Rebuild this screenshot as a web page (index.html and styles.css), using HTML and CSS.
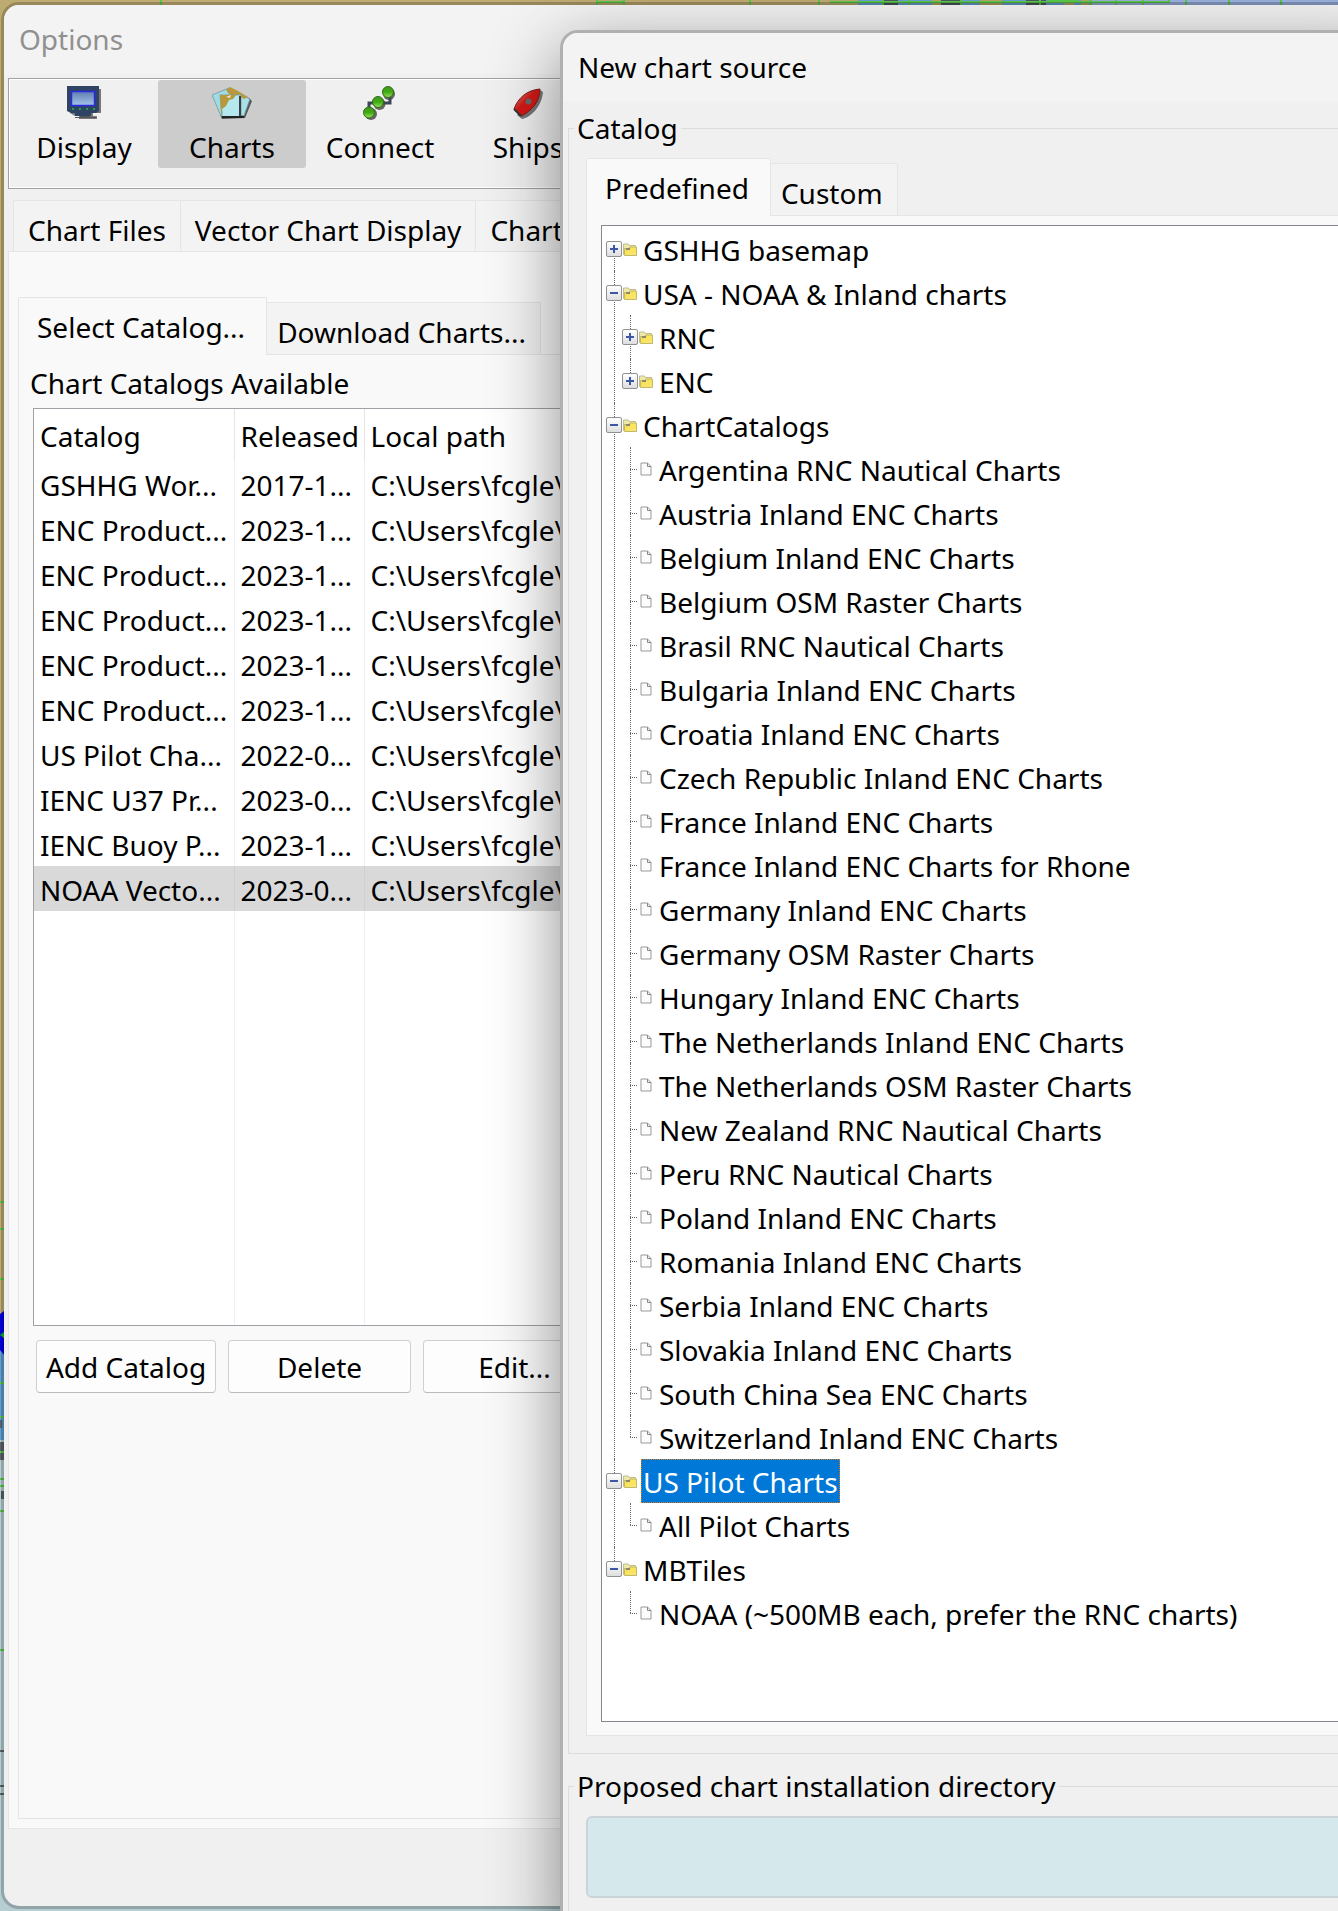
FILE: index.html
```html
<!DOCTYPE html>
<html lang="en">
<head>
<meta charset="utf-8">
<title>Options</title>
<link rel="stylesheet" href="styles.css">
</head>
<body>
<svg class="sprite" aria-hidden="true">
  <defs>
    <linearGradient id="yellow" x1="0" y1="0" x2="1" y2="1"><stop offset="0" stop-color="#f7e04a"/><stop offset="1" stop-color="#f9e773"/></linearGradient>
    <linearGradient id="screen" x1="0" y1="0" x2="0" y2="1"><stop offset="0" stop-color="#5f7fb2"/><stop offset="1" stop-color="#a5c3ea"/></linearGradient>
    <linearGradient id="green" x1="0" y1="0" x2="0" y2="1"><stop offset="0" stop-color="#3f9a1c"/><stop offset=".5" stop-color="#3faa12"/><stop offset="1" stop-color="#9be05c"/></linearGradient>
    <linearGradient id="red" x1="0" y1="0" x2="1" y2="1"><stop offset="0" stop-color="#e58a86"/><stop offset=".45" stop-color="#cf1a16"/><stop offset="1" stop-color="#e01010"/></linearGradient>
    <symbol id="folder" viewBox="0 0 14 13">
      <path d="M0.500 11.500V1h5l1 1.500H12.500v9z" fill="#efe9a8" stroke="#c0bb94"/>
      <path d="M1.500 12.500V5.500h4l1.500-1.500H13.500v8.500z" fill="url(#yellow)" stroke="#c2b86a"/>
      <path d="M3 5h4v2H3z" fill="#8a8a6a"/>
    </symbol>
    <symbol id="page" viewBox="0 0 12 14">
      <path d="M1 1h6.500L11 4.500V13H1z" fill="#fcfcfc" stroke="#999"/>
      <path d="M7.500 1v3.500H11" fill="none" stroke="#888"/>
    </symbol>
  </defs>
</svg>

<svg class="map-top" aria-hidden="true" width="1338" height="5">
  <path d="M161 0v5M597 2h27M597 0v5M624 0v5M750 0v5M819 0v5" stroke="#5ac94a" stroke-width="2" fill="none"/>
  <path d="M858 0h232v5H858z" fill="#6a9fd2"/>
  <path d="M1090 0h248v5h-248z" fill="#9ab0dc"/>
  <path d="M884 0h14v5h-14zM941 0h20v5h-20zM1026 0h20v5h-20z" fill="#4d5560"/>
  <path d="M932 0h9v5h-9zM980 0h22v5h-22zM1064 3h10v2h-10zM1081 0h8v5h-8z" fill="#b5a565"/>
  <path d="M830 2h340M883 0v5M909 0v5M961 0v5M1040 0v5M1091 0v5M1116 0v5M1143 0v5M1169 0v3M1186 0v5M1229 0v5M1281 0v5" stroke="#5ac94a" stroke-width="2" fill="none"/>
  <path d="M1048 0h30v3h-30z" fill="#5ac94a"/>
</svg>
<svg class="map-left" aria-hidden="true" width="5" height="1911">
  <path d="M0 1320h5v120H0z" fill="#5f9fd2"/>
  <path d="M0 1440h5v471H0z" fill="#b6cdd1"/>
  <path d="M0 1314l4-3h1v45l-5-6z" fill="#0000e8"/>
  <path d="M0 1442h5v18H0zM0 1420h2v8H0zM1 1491h4v8H1zM0 1750h5v2H0zM0 1785h5v2H0zM0 1793h5v2H0z" fill="#5c6468"/>
  <path d="M0 1202h5M0 1229h5M0 1279h5M0 1383h5M0 1417h5M0 1452h5M0 1479h5M0 1486h5M0 1511h5M0 1650h5" stroke="#5ac94a" stroke-width="2"/>
  <path d="M0 1335l5-4v8z" fill="#10c020"/>
</svg>

<main class="window options">
  <h1 class="titlebar inactive">Options</h1>
  <nav class="toolbar">
    <button class="tool"><svg width="34" height="34" viewBox="0 0 34 34"><path d="M3 3h31v24h-8v3h4v3H12v-3H8l-5-3z" fill="#777"/><path d="M0 0h32v25l-3 2H4l-4-2zM8 27h16v3H8z" fill="#2f4464"/><path d="M13 30h10v1h6v1H8v-1h5z" fill="#555"/><path d="M4.500 5.500h23v14h-23z" fill="url(#screen)" stroke="#2a2ae0" stroke-width="1.500"/><path d="M5 23h2M12 23h2M19 23h2M26 23h2" stroke="#1ea43c" stroke-width="2"/></svg>Display</button>
    <button class="tool active"><svg width="40" height="34" viewBox="0 0 40 34"><path d="M10 33l-2-4 20-1 9-16 3 3-7 17z" fill="#555"/><path d="M0 9L17 2l4 4-12 24z" fill="#9fdbe2" stroke="#7fa4a8"/><path d="M20 4l18 9-6 17-12-2z" fill="#a8e2e8" stroke="#6c8f94"/><path d="M14 4l4-3 8 4 10 6-4 2-5-3-4 2-6-4z" fill="#b8983c"/><path d="M8 9h21v22H10z" fill="#b4e8ee" stroke="#7aa0a4"/><path d="M8 9h16l-3 4-4 1-3 6-4 3 1 6-2-5z" fill="#b8983c"/><path d="M14 11l5-2-1 3z" fill="#f0e6c4"/><path d="M28 10v20" stroke="#3a3f40" stroke-width="2"/><path d="M10 31h22" stroke="#222" stroke-width="2"/></svg>Charts</button>
    <button class="tool"><svg width="34" height="34" viewBox="0 0 34 34"><g fill="#666"><circle cx="26" cy="8" r="6"/><circle cx="16.500" cy="18" r="6"/><circle cx="8" cy="28" r="6"/></g><path d="M6 24v-7h10M16 17h11V8" fill="none" stroke="#3c4856" stroke-width="3"/><g fill="url(#green)" stroke="#2e6b1a"><circle cx="25" cy="6" r="5.500"/><circle cx="15" cy="16" r="5.500"/><circle cx="6" cy="26.500" r="5.500"/></g></svg>Connect</button>
    <button class="tool"><svg width="34" height="34" viewBox="0 0 34 34"><path d="M6 29l5 4C21 31 31 19 32 6l-3-2z" fill="#777"/><path d="M3 23C7 12 16 4 29 3c0 12-8 22-19 27z" fill="url(#red)" stroke="#7a1a18"/><path d="M3 23l7 7" stroke="#333" stroke-width="2"/><circle cx="17.500" cy="15.500" r="3" fill="#666a6c"/></svg>Ships</button>
  </nav>

  <div class="tabs outer-tabs" role="tablist">
    <button class="tab" role="tab">Chart Files</button>
    <button class="tab" role="tab">Vector Chart Display</button>
    <button class="tab" role="tab">Chart Groups</button>
  </div>
  <section class="panel outer-panel">
    <div class="tabs" role="tablist">
      <button class="tab selected" role="tab" aria-selected="true">Select Catalog...</button>
      <button class="tab" role="tab">Download Charts...</button>
    </div>
    <div class="panel catalogs">
      <h2 class="caption">Chart Catalogs Available</h2>
      <div class="list">
        <table>
          <colgroup><col class="c-name"><col class="c-date"><col></colgroup>
          <thead><tr><th>Catalog</th><th>Released</th><th>Local path</th></tr></thead>
          <tbody>
            <tr><td>GSHHG Wor...</td><td>2017-1...</td><td>C:\Users\fcgle\</td></tr>
            <tr><td>ENC Product...</td><td>2023-1...</td><td>C:\Users\fcgle\</td></tr>
            <tr><td>ENC Product...</td><td>2023-1...</td><td>C:\Users\fcgle\</td></tr>
            <tr><td>ENC Product...</td><td>2023-1...</td><td>C:\Users\fcgle\</td></tr>
            <tr><td>ENC Product...</td><td>2023-1...</td><td>C:\Users\fcgle\</td></tr>
            <tr><td>ENC Product...</td><td>2023-1...</td><td>C:\Users\fcgle\</td></tr>
            <tr><td>US Pilot Cha...</td><td>2022-0...</td><td>C:\Users\fcgle\</td></tr>
            <tr><td>IENC U37 Pr...</td><td>2023-0...</td><td>C:\Users\fcgle\</td></tr>
            <tr><td>IENC Buoy P...</td><td>2023-1...</td><td>C:\Users\fcgle\</td></tr>
            <tr class="current"><td>NOAA Vecto...</td><td>2023-0...</td><td>C:\Users\fcgle\</td></tr>
            <tr class="filler"><td></td><td></td><td></td></tr>
          </tbody>
        </table>
      </div>
      <div class="actions">
        <button class="btn">Add Catalog</button>
        <button class="btn">Delete</button>
        <button class="btn">Edit...</button>
      </div>
    </div>
  </section>
</main>

<section class="window dialog" role="dialog" aria-labelledby="dialog-title">
  <h1 class="titlebar" id="dialog-title">New chart source</h1>
  <fieldset class="group grow">
    <legend>Catalog</legend>
    <div class="tabs" role="tablist">
      <button class="tab selected" role="tab" aria-selected="true">Predefined</button>
      <button class="tab" role="tab">Custom</button>
    </div>
    <div class="panel tree-panel">
      <ul class="tree">
        <li><div class="node"><button class="toggle" aria-label="Expand"></button><svg class="folder"><use href="#folder"/></svg><span>GSHHG basemap</span></div></li>
        <li><div class="node"><button class="toggle open" aria-label="Collapse"></button><svg class="folder"><use href="#folder"/></svg><span>USA - NOAA &amp; Inland charts</span></div>
          <ul>
            <li><div class="node"><button class="toggle" aria-label="Expand"></button><svg class="folder"><use href="#folder"/></svg><span>RNC</span></div></li>
            <li><div class="node"><button class="toggle" aria-label="Expand"></button><svg class="folder"><use href="#folder"/></svg><span>ENC</span></div></li>
          </ul>
        </li>
        <li><div class="node"><button class="toggle open" aria-label="Collapse"></button><svg class="folder"><use href="#folder"/></svg><span>ChartCatalogs</span></div>
          <ul>
            <li><div class="node leaf"><svg class="page"><use href="#page"/></svg><span>Argentina RNC Nautical Charts</span></div></li>
            <li><div class="node leaf"><svg class="page"><use href="#page"/></svg><span>Austria Inland ENC Charts</span></div></li>
            <li><div class="node leaf"><svg class="page"><use href="#page"/></svg><span>Belgium Inland ENC Charts</span></div></li>
            <li><div class="node leaf"><svg class="page"><use href="#page"/></svg><span>Belgium OSM Raster Charts</span></div></li>
            <li><div class="node leaf"><svg class="page"><use href="#page"/></svg><span>Brasil RNC Nautical Charts</span></div></li>
            <li><div class="node leaf"><svg class="page"><use href="#page"/></svg><span>Bulgaria Inland ENC Charts</span></div></li>
            <li><div class="node leaf"><svg class="page"><use href="#page"/></svg><span>Croatia Inland ENC Charts</span></div></li>
            <li><div class="node leaf"><svg class="page"><use href="#page"/></svg><span>Czech Republic Inland ENC Charts</span></div></li>
            <li><div class="node leaf"><svg class="page"><use href="#page"/></svg><span>France Inland ENC Charts</span></div></li>
            <li><div class="node leaf"><svg class="page"><use href="#page"/></svg><span>France Inland ENC Charts for Rhone</span></div></li>
            <li><div class="node leaf"><svg class="page"><use href="#page"/></svg><span>Germany Inland ENC Charts</span></div></li>
            <li><div class="node leaf"><svg class="page"><use href="#page"/></svg><span>Germany OSM Raster Charts</span></div></li>
            <li><div class="node leaf"><svg class="page"><use href="#page"/></svg><span>Hungary Inland ENC Charts</span></div></li>
            <li><div class="node leaf"><svg class="page"><use href="#page"/></svg><span>The Netherlands Inland ENC Charts</span></div></li>
            <li><div class="node leaf"><svg class="page"><use href="#page"/></svg><span>The Netherlands OSM Raster Charts</span></div></li>
            <li><div class="node leaf"><svg class="page"><use href="#page"/></svg><span>New Zealand RNC Nautical Charts</span></div></li>
            <li><div class="node leaf"><svg class="page"><use href="#page"/></svg><span>Peru RNC Nautical Charts</span></div></li>
            <li><div class="node leaf"><svg class="page"><use href="#page"/></svg><span>Poland Inland ENC Charts</span></div></li>
            <li><div class="node leaf"><svg class="page"><use href="#page"/></svg><span>Romania Inland ENC Charts</span></div></li>
            <li><div class="node leaf"><svg class="page"><use href="#page"/></svg><span>Serbia Inland ENC Charts</span></div></li>
            <li><div class="node leaf"><svg class="page"><use href="#page"/></svg><span>Slovakia Inland ENC Charts</span></div></li>
            <li><div class="node leaf"><svg class="page"><use href="#page"/></svg><span>South China Sea ENC Charts</span></div></li>
            <li><div class="node leaf"><svg class="page"><use href="#page"/></svg><span>Switzerland Inland ENC Charts</span></div></li>
          </ul>
        </li>
        <li><div class="node"><button class="toggle open" aria-label="Collapse"></button><svg class="folder"><use href="#folder"/></svg><span class="picked">US Pilot Charts</span></div>
          <ul>
            <li><div class="node leaf"><svg class="page"><use href="#page"/></svg><span>All Pilot Charts</span></div></li>
          </ul>
        </li>
        <li><div class="node"><button class="toggle open" aria-label="Collapse"></button><svg class="folder"><use href="#folder"/></svg><span>MBTiles</span></div>
          <ul>
            <li><div class="node leaf"><svg class="page"><use href="#page"/></svg><span>NOAA (~500MB each, prefer the RNC charts)</span></div></li>
          </ul>
        </li>
      </ul>
    </div>
  </fieldset>
  <fieldset class="group directory">
    <legend>Proposed chart installation directory</legend>
    <input class="path" type="text" aria-label="Proposed chart installation directory">
  </fieldset>
</section>
</body>
</html>
```
FILE: styles.css
```css
* { box-sizing: border-box; }

body {
  margin: 0;
  position: relative;
  min-height: 100vh;
  overflow: hidden;
  background: linear-gradient(#beab72 70%, #b6cdd1 70%);
  color: #000;
  font: 28px/38px "Noto Sans", "Open Sans", sans-serif;
}

button, input { font: inherit; color: inherit; }
h1, h2, ul { margin: 0; padding: 0; font-size: inherit; font-weight: 400; list-style: none; }

.sprite { position: absolute; width: 0; height: 0; }
.map-top, .map-left { position: absolute; left: 0; top: 0; }

/* Windows */
.window {
  position: absolute;
  display: flex;
  flex-direction: column;
  border: 3px solid rgba(0, 0, 0, 0.2);
  border-radius: 18px;
  background: #f0f0f0;
  background-clip: padding-box;
  overflow: hidden;
}
.options { left: 1px; top: 2px; right: -20px; bottom: 2px; }
.dialog {
  left: 560px; top: 30px; right: -60px; bottom: -40px;
  border-color: #b0b0b0;
  box-shadow: 0 20px 70px rgba(0, 0, 0, 0.45);
}

.titlebar { flex: none; height: 69px; padding: 15px; background: #f3f3f3; }
.titlebar.inactive { color: #909090; }

/* Toolbar */
.toolbar {
  flex: none;
  display: flex;
  align-items: flex-start;
  height: 111px;
  margin: 4px 4px 0;
  border: 1px solid #a0a0a6;
  box-shadow: inset 0 0 0 1px #fff;
  padding: 1px;
}
.tool {
  display: flex;
  flex-direction: column;
  align-items: center;
  gap: 8px;
  width: 148px;
  height: 88px;
  padding: 6px 0 0;
  border: 0;
  border-radius: 3px;
  background: none;
}
.tool svg { flex: none; }
.tool.active { background: #ccc; }

/* Tabs and the panels below them */
.tabs { flex: none; display: flex; align-items: flex-end; }
.tab {
  height: 52px;
  margin: 0 0 0 -1px;
  padding: 10px 14px 4px 10px;
  border: 1px solid #e5e5e5;
  border-bottom: 0;
  border-radius: 2px 2px 0 0;
  background: #f3f3f3;
  line-height: 38px;
  white-space: nowrap;
}
.tab.selected {
  position: relative;
  height: 58px;
  margin: 0 0 -1px;
  padding: 10px 21px 10px 18px;
  background: #f9f9f9;
}
.outer-tabs { margin: 11px 0 0 10px; }
.outer-tabs .tab { height: 51px; padding: 10px 14px 4px; }

.panel {
  flex: 1;
  display: flex;
  flex-direction: column;
  border: 1px solid #e5e5e5;
  background: #f9f9f9;
}
.outer-panel { margin: 0 4px 77px; padding: 45px 9px 9px; }

/* Catalog list */
.catalogs {
  display: grid;
  grid-template-rows: auto 137fr auto 63fr;
  padding: 9px 11px 0;
}
.list {
  margin: 6px 0 0 3px;
  border: 1px solid #a0a0a6;
  background: #fff;
  overflow: hidden;
}
table {
  width: 100%;
  height: 100%;
  table-layout: fixed;
  border-collapse: collapse;
}
.c-name { width: 200px; }
.c-date { width: 130px; }
th, td {
  height: 45px;
  padding: 2px 0 0 6px;
  border-right: 1px solid #eceff6;
  font-weight: 400;
  text-align: left;
  white-space: nowrap;
  overflow: hidden;
}
th { height: 52px; border-right-color: #e5e5e5; }
.current td { background: #d9d9d9; border-right-color: #ccd0d8; }
.filler td { height: auto; }

.actions { display: flex; gap: 12px; margin: 14px 0 0 6px; }
.btn {
  flex: none;
  width: 183px;
  height: 53px;
  padding: 0;
  border: 1px solid #d0d0d0;
  border-bottom-color: #bbb;
  border-radius: 4px;
  background: #fdfdfd;
}
.btn:first-child { width: 180px; }

/* Group boxes */
.group {
  flex: none;
  display: flex;
  flex-direction: column;
  min-width: 0;
  margin: 7px 5px 0;
  padding: 11px 17px 17px;
  border: 1px solid #dcdcdc;
}
.group.grow { flex: 1; }
.group legend { margin-left: -12px; padding: 0 3px; }
.directory { margin-top: 13px; padding: 11px 17px 49px; }
.path {
  width: 100%;
  height: 82px;
  border: 2px solid #cbd5d7;
  border-radius: 6px;
  background: #d5e9ed;
}

/* Tree */
.tree-panel { padding: 9px 14px 13px; }
.tree {
  flex: 1;
  padding: 1px 4px 0;
  border: 1px solid #828790;
  background: #fff;
}
.tree ul { padding-left: 16px; }
.tree li { position: relative; }
.tree li::before {
  content: "";
  position: absolute;
  left: 8px;
  top: 0;
  bottom: 0;
  border-left: 1px dotted #666;
}
.tree > li:first-child::before { top: 22px; }
.tree li:last-child::before { bottom: auto; height: 22px; }
.node { position: relative; display: flex; align-items: center; height: 44px; }
.node span { margin-left: 4px; padding: 3px 1px 1px; border: 1px dotted transparent; }
.node .picked { border-color: #d8741a; background: #0078d7; color: #fff; }
.leaf { padding-left: 18px; }
.leaf::before {
  content: "";
  position: absolute;
  left: 8px;
  top: 22px;
  width: 7px;
  border-top: 1px dotted #666;
}
.folder { flex: none; width: 14px; height: 13px; margin-left: 1px; }
.page { flex: none; width: 12px; height: 14px; margin-right: 1px; }
.toggle {
  flex: none;
  width: 16px;
  height: 16px;
  padding: 0;
  border: 1px solid #919191;
  border-radius: 2px;
  background:
    linear-gradient(#3c56a6, #3c56a6) center / 8px 2px no-repeat,
    linear-gradient(#3c56a6, #3c56a6) center / 2px 8px no-repeat,
    linear-gradient(#fff, #dedede);
}
.toggle.open {
  background:
    linear-gradient(#3c56a6, #3c56a6) center / 8px 2px no-repeat,
    linear-gradient(#fff, #dedede);
}
```
